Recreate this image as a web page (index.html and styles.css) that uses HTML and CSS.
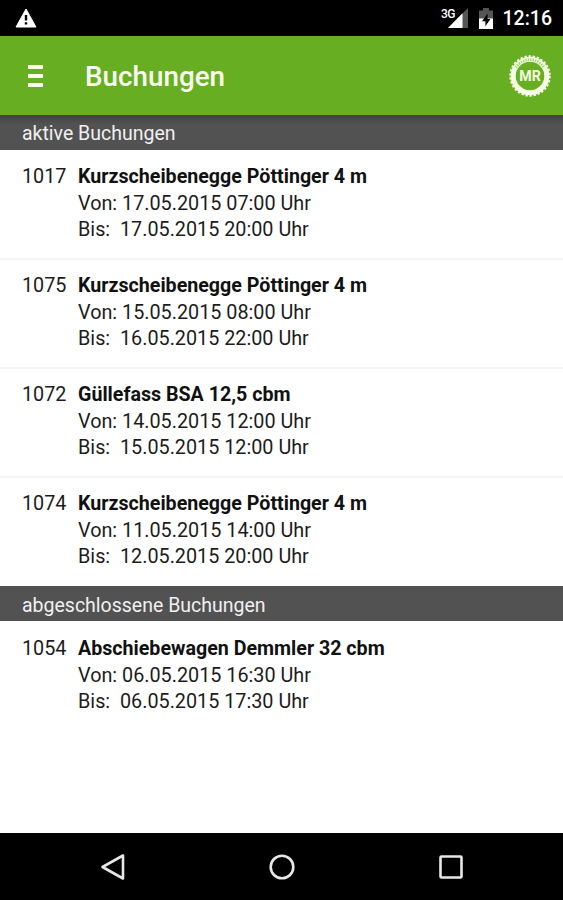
FILE: index.html
```
<!DOCTYPE html>
<html lang="de">
<head>
    <meta charset="UTF-8">
    <meta name="viewport" content="width=device-width, initial-scale=1.0">
    <title>Buchungen</title>
    <link rel="stylesheet" href="styles.css">
</head>
<body>

    <!-- Status bar -->
    <div class="status-bar">
        <svg class="warning-icon" width="22" height="20" viewBox="0 0 22 20">
            <path d="M11 1 L21 19 H1 Z" fill="#fff" stroke="#fff" stroke-linejoin="round"/>
            <path d="M11 7v5.5M11 14.2v2.3" stroke="#000" stroke-width="2.4"/>
        </svg>
        <div class="status-right">
            <span class="network">3G</span>
            <svg class="signal-icon" width="21" height="20" viewBox="0 0 21 20">
                <path d="M21 0V20H1Z" fill="#555"/>
                <path d="M15.5 5.2V20H1Z" fill="#fff"/>
            </svg>
            <svg class="battery-icon" width="14" height="21" viewBox="0 0 14 21">
                <path d="M4 0h6v2.5h4V11H0V2.5h4Z" fill="#555"/>
                <path d="M0 10.5h14V21H0Z" fill="#fff"/>
                <path d="M8.6 5.5 3 13.2h3.4v5L11.4 11H8.6Z" fill="#000"/>
            </svg>
            <span class="clock">12:16</span>
        </div>
    </div>

    <header>
        <div class="menu-button">
            <span></span>
            <span></span>
            <span></span>
        </div>
        <h1>Buchungen</h1>
        <svg class="logo" width="42" height="42" viewBox="0 0 42 42">
            <circle cx="21" cy="21" r="16.8" fill="none" stroke="#f4ffe4" stroke-width="5"/>
            <circle cx="21" cy="21" r="19.8" fill="none" stroke="#f4ffe4" stroke-width="1.8" stroke-dasharray="2.4 1.747"/>
            <path d="M7 12.5A16.4 16.4 0 0 1 35 12.5" fill="none" stroke="#a6d474" stroke-width="2.6" stroke-dasharray="1.4 1"/>
            <text x="21" y="26.3" text-anchor="middle" textLength="21.5" lengthAdjust="spacingAndGlyphs">MR</text>
        </svg>
    </header>

    <main>
        <h2 class="first">aktive Buchungen</h2>
        <div class="booking">
            <span class="number">1017</span>
            <div class="details">
                <h3>Kurzscheibenegge Pöttinger 4 m</h3>
                <p>Von: 17.05.2015 07:00 Uhr</p>
                <p>Bis:&nbsp; 17.05.2015 20:00 Uhr</p>
            </div>
        </div>
        <div class="booking">
            <span class="number">1075</span>
            <div class="details">
                <h3>Kurzscheibenegge Pöttinger 4 m</h3>
                <p>Von: 15.05.2015 08:00 Uhr</p>
                <p>Bis:&nbsp; 16.05.2015 22:00 Uhr</p>
            </div>
        </div>
        <div class="booking">
            <span class="number">1072</span>
            <div class="details">
                <h3>Güllefass BSA 12,5 cbm</h3>
                <p>Von: 14.05.2015 12:00 Uhr</p>
                <p>Bis:&nbsp; 15.05.2015 12:00 Uhr</p>
            </div>
        </div>
        <div class="booking">
            <span class="number">1074</span>
            <div class="details">
                <h3>Kurzscheibenegge Pöttinger 4 m</h3>
                <p>Von: 11.05.2015 14:00 Uhr</p>
                <p>Bis:&nbsp; 12.05.2015 20:00 Uhr</p>
            </div>
        </div>

        <h2 class="second">abgeschlossene Buchungen</h2>
        <div class="booking">
            <span class="number">1054</span>
            <div class="details">
                <h3>Abschiebewagen Demmler 32 cbm</h3>
                <p>Von: 06.05.2015 16:30 Uhr</p>
                <p>Bis:&nbsp; 06.05.2015 17:30 Uhr</p>
            </div>
        </div>
    </main>

    <!-- Navigation bar -->
    <nav>
        <svg width="28" height="28" viewBox="0 0 28 28">
            <path d="M24 2.5V25.5L3.5 14Z"/>
        </svg>
        <svg width="28" height="28" viewBox="0 0 28 28">
            <circle cx="14" cy="14" r="11.3"/>
        </svg>
        <svg width="28" height="28" viewBox="0 0 28 28">
            <rect x="3.5" y="3.5" width="21" height="21" rx="1"/>
        </svg>
    </nav>

</body>
</html>
```

FILE: styles.css
```
* {
    box-sizing: border-box;
}

body {
    font-family: Roboto, sans-serif;
    font-size: 19.8px;
    color: #1c1c1c;
    background-color: #fff;
    margin: 0;
    height: 900px;
    display: flex;
    flex-direction: column;
    overflow: hidden;
}

h1, h2, h3, p {
    margin: 0;
}

.status-bar {
    height: 36px;
    background-color: #000;
    color: #fff;
    display: flex;
    justify-content: space-between;
    padding: 0 11px 0 15px;
}

.warning-icon {
    margin-top: 8px;
}

.status-right {
    display: flex;
}

.network {
    font-size: 12px;
    font-weight: 500;
    letter-spacing: -0.8px;
    line-height: 14px;
    margin-top: 7px;
    margin-right: -8px;
}

.signal-icon {
    margin-top: 8px;
    margin-right: 11px;
}

.battery-icon {
    margin-top: 8px;
    margin-right: 10px;
}

.clock {
    font-size: 19.5px;
    font-weight: 500;
    line-height: 38px;
}

header {
    height: 79px;
    background-color: #68ae22;
    display: flex;
    align-items: center;
    padding: 0 12px 0 28px;
}

.menu-button {
    width: 15px;
    display: flex;
    flex-direction: column;
    gap: 5px;
    margin-right: 42px;
}

.menu-button span {
    height: 4px;
    background-color: #f8ffee;
}

h1 {
    flex: 1;
    font-size: 27.8px;
    font-weight: 500;
    color: #f8ffee;
    padding-top: 2px;
}

.logo text {
    font-size: 15px;
    font-weight: 700;
    fill: #f4ffe4;
}

h2 {
    height: 35px;
    line-height: 38px;
    padding-left: 22px;
    font-size: 19.5px;
    font-weight: 400;
    color: #f0f0f0;
    background-color: #525252;
}

h2.first {
    background-image: linear-gradient(#404040, #525252 9px); /* Shadow of the header */
}

h2.second {
    line-height: 39px;
}

.booking {
    height: 109px;
    display: flex;
    padding: 14px 0 0 22px;
    line-height: 26.6px;
}

/* Divider between two bookings */
.booking + .booking {
    height: 110px;
    margin-top: -1px;
    padding-top: 13px;
    border-top: 2px solid #f4f4f4;
}

h2.second + .booking {
    padding-top: 15px;
}

.number {
    width: 56px;
}

h3 {
    font-size: 19.65px;
    font-weight: 700;
    color: #111;
}

main {
    flex: 1;
}

nav {
    height: 67px;
    background-color: #000;
    display: flex;
    justify-content: center;
    align-items: center;
    gap: 141px;
}

nav svg {
    fill: none;
    stroke: #e8e8e8;
    stroke-width: 2.6;
    stroke-linejoin: round;
}
```
